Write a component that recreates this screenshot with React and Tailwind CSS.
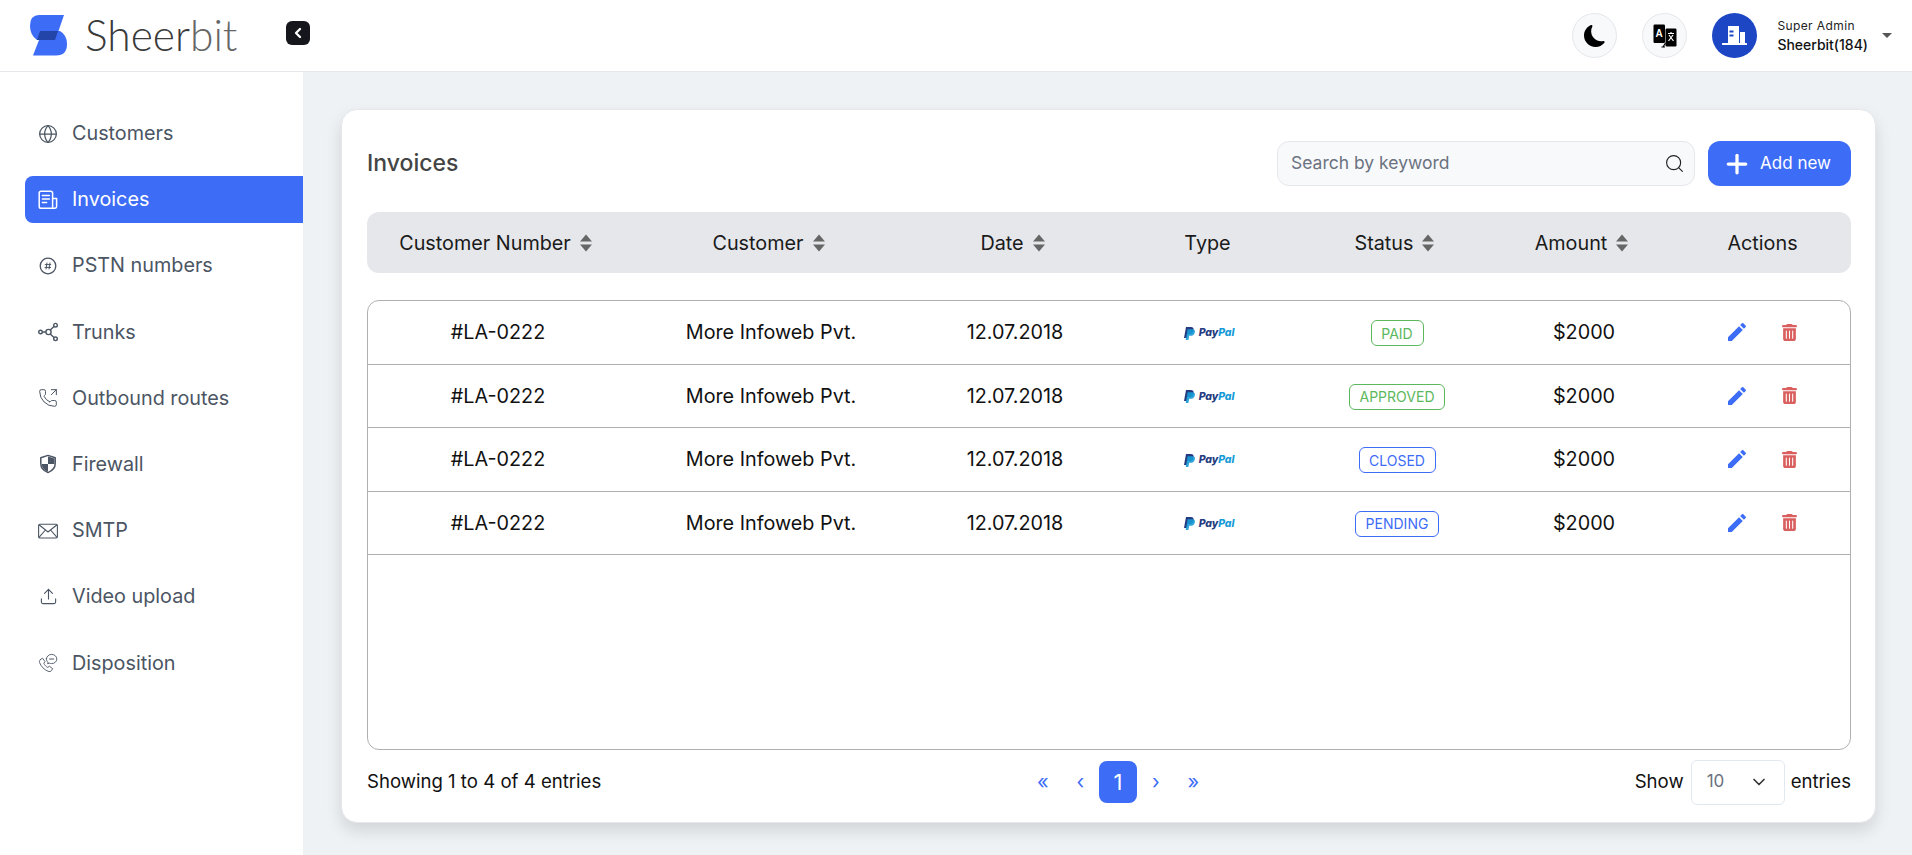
import { Globe, Upload, PhoneOutgoing, Plus, Search, ChevronLeft, ChevronDown } from 'lucide-react';
import { MdEdit } from 'react-icons/md';
import { FaTrashCan } from 'react-icons/fa6';
import { BsMoonFill } from 'react-icons/bs';

const InvoiceIcon = () => (
  <svg width="20" height="20" viewBox="0 0 20 20" fill="none" stroke="currentColor" strokeWidth="1.5" strokeLinejoin="round" strokeLinecap="round">
    <path d="M14.6 18.2H3C2 18.2 1.2 17.4 1.2 16.4V3C1.2 2 2 1.2 3 1.2H12.6C13.6 1.2 14.6 2 14.6 3Z" />
    <path d="M14.6 8.6H18.6V16.6C18.6 17.5 17.9 18.2 17 18.2H14.6" />
    <path d="M4.4 5.4H11.4M4.4 9H11.4M4.4 12.6H8.6" />
  </svg>
);

const HashIcon = () => (
  <svg width="20" height="20" viewBox="0 0 20 20" fill="none" stroke="currentColor" strokeWidth="1.3">
    <circle cx="10" cy="10" r="7.8" />
    <path d="M9 6.6L8 13.4M12 6.6L11 13.4M6.8 8.6H13.2M6.6 11.4H13" strokeWidth="1" />
  </svg>
);

const TrunksIcon = () => (
  <svg width="20" height="20" viewBox="0 0 20 20" fill="none" stroke="currentColor" strokeWidth="1.4">
    <circle cx="2.5" cy="10" r="1.8" />
    <circle cx="10.5" cy="10" r="2.6" />
    <circle cx="17.5" cy="3.2" r="1.8" />
    <circle cx="17.5" cy="16.8" r="1.8" />
    <path d="M4.4 10H7.8M12.2 8L16 4.5M12.2 12L16 15.5" />
  </svg>
);

const ShieldIcon = () => (
  <svg width="20" height="20" viewBox="0 0 20 20">
    <path d="M10 1.4L17.2 3.8V9.6C17.2 13.8 14.2 17 10 18.6C5.8 17 2.8 13.8 2.8 9.6V3.8Z" fill="none" stroke="currentColor" strokeWidth="1.5" strokeLinejoin="round" />
    <path d="M10 2.6L16.4 4.6V10H10Z" fill="currentColor" />
    <path d="M3.6 10H10V17.8C6.4 16.2 4 13.6 3.6 10Z" fill="currentColor" />
  </svg>
);

const MailIcon = () => (
  <svg width="20" height="20" viewBox="0 0 20 20" fill="none" stroke="currentColor" strokeWidth="1.1" strokeLinejoin="round">
    <rect x="0.6" y="3.2" width="18.8" height="13.8" rx="1.2" />
    <path d="M1 3.8L10 11L19 3.8M1 16.4L7.4 9M19 16.4L12.6 9" />
  </svg>
);

const DispositionIcon = () => (
  <svg width="20" height="20" viewBox="0 0 20 20" fill="none" stroke="currentColor" strokeWidth="0.9" strokeLinejoin="round" strokeLinecap="round">
    <path d="M2.6 6.4L4.6 5.2L7 8.6L5.8 10.2C6.6 12.2 8 13.6 9.8 14.4L11.4 13.2L14.6 15.6L13.6 17.6C12.8 18.6 11.4 18.8 10 18.2C6.2 16.8 3 13.4 1.6 9.6C1.2 8.2 1.6 7 2.6 6.4Z" />
    <path d="M8.4 5.8C8.6 3.2 11 1.4 13.6 1.4C16.4 1.4 18.8 3.4 18.8 6C18.8 8.6 16.4 10.6 13.6 10.6C12.8 10.6 12 10.4 11.4 10.2L9.6 10.8L10 9.2C9 8.4 8.4 7.2 8.4 5.8Z" />
    <path d="M11.6 6H15.6" strokeWidth="1.2" strokeDasharray="1 0.6" />
  </svg>
);

const TranslateIcon = () => (
  <svg width="24" height="24" viewBox="0 0 24 24">
    <rect x="0.5" y="0.5" width="11.5" height="18.5" rx="1.2" fill="#000" />
    <rect x="12.5" y="4.5" width="11" height="18" rx="1.2" fill="#000" />
    <text x="6.2" y="13" fontSize="10" fontWeight="700" fill="#fff" textAnchor="middle" fontFamily="'Liberation Sans', sans-serif">A</text>
    <path d="M15 9.5H21M18 8V9.5M16 11L20.5 17M20 11L15.5 17" stroke="#fff" strokeWidth="1.2" fill="none" />
    <path d="M8.5 23L12 23M12.5 19L10 23" stroke="#000" strokeWidth="1.2" fill="none" />
  </svg>
);

const BuildingIcon = () => (
  <svg width="25" height="19" viewBox="0 0 25 19" fill="#fff">
    <path d="M6 0H17V17H6ZM7.5 4.5V6.5H11.5V4.5ZM7.5 8.5V10.5H11.5V8.5Z" fillRule="evenodd" />
    <rect x="18" y="6" width="5" height="11" />
    <rect x="0" y="17" width="25" height="2" rx="0.5" />
  </svg>
);

const SortIcon = () => (
  <svg width="12" height="18" viewBox="0 0 12 18" fill="#666">
    <path d="M6 0.5L12 7.5H0Z" />
    <path d="M6 17.5L12 10.5H0Z" />
  </svg>
);

const PayPal = () => (
  <div className="flex items-center gap-[4px] translate-y-[1px] -translate-x-[1px]">
    <svg width="11" height="13" viewBox="0 0 11 13">
      <path d="M2 0H6.8C9.2 0 10 1.4 9.6 3.4C9.1 5.8 7.6 7 5.2 7H3.6L2.8 11H0Z" fill="#253b80" />
      <path d="M3.6 2.2H8.4C10.6 2.2 11.3 3.6 10.8 5.4C10.3 7.6 8.8 8.8 6.6 8.8H5.2L4.4 13H1.7Z" fill="#179bd7" opacity="0.9" />
    </svg>
    <span className="text-[10.5px] leading-none font-extrabold italic tracking-[-0.1px] font-['Inter',sans-serif]">
      <span className="text-[#253b80]">Pay</span>
      <span className="text-[#179bd7]">Pal</span>
    </span>
  </div>
);

const navItems = [
  { label: 'Customers', icon: <Globe size={20} strokeWidth={1.5} /> },
  { label: 'Invoices', icon: <InvoiceIcon />, active: true },
  { label: 'PSTN numbers', icon: <HashIcon /> },
  { label: 'Trunks', icon: <TrunksIcon /> },
  { label: 'Outbound routes', icon: <PhoneOutgoing size={20} strokeWidth={1.2} /> },
  { label: 'Firewall', icon: <ShieldIcon /> },
  { label: 'SMTP', icon: <MailIcon /> },
  { label: 'Video upload', icon: <Upload size={19} strokeWidth={1.4} /> },
  { label: 'Disposition', icon: <DispositionIcon /> },
];

const columns = [
  { label: 'Customer Number', sort: true },
  { label: 'Customer', sort: true },
  { label: 'Date', sort: true },
  { label: 'Type' },
  { label: 'Status', sort: true },
  { label: 'Amount', sort: true },
  { label: 'Actions' },
];

const rows = [
  { status: 'PAID', cls: 'border-[#5cb85c] text-[#5cb85c] w-[53px]' },
  { status: 'APPROVED', cls: 'border-[#5cb85c] text-[#5cb85c] w-[96px]' },
  { status: 'CLOSED', cls: 'border-[#3d6cf6] text-[#3d6cf6] w-[77px]' },
  { status: 'PENDING', cls: 'border-[#3d6cf6] text-[#3d6cf6] w-[84px]' },
];

const gridCols = 'grid grid-cols-[260px_286px_202px_188px_186px_188px_1fr]';

const App = () => {
  return (
    <div className="h-[855px] flex flex-col overflow-hidden bg-[#eff2f5] font-['Inter',sans-serif]">
      {/* Top bar */}
      <header className="h-[72px] shrink-0 bg-white border-b border-[#e5e7eb] flex items-center">
        <div className="flex items-center pl-[30px] pb-[1px]">
          <svg width="37" height="41" viewBox="0 0 37 41" className="shrink-0">
            <path d="M9 0H34L28.5 16H30Q37 20 37 29Q37 40.5 26 40.5H3L9 25H7Q0 20 0 11Q0 0 9 0Z" fill="#3d6cf6" />
            <path d="M10 16H28L25 25H7Z" fill="#2344a8" />
          </svg>
          <span className="ml-[18px] text-[42.5px] leading-none text-[#3a3a3a] font-['Lato',sans-serif] font-light">
            Sheer<span className="text-[#666]">bit</span>
          </span>
          <button className="ml-[49px] mb-[5px] w-[24px] h-[24px] rounded-md bg-[#15171c] flex items-center justify-center">
            <ChevronLeft size={16} strokeWidth={3.5} className="text-white" />
          </button>
        </div>

        <div className="ml-auto flex items-center pr-[20px]">
          <div className="w-[45px] h-[45px] rounded-full bg-[#f8f9fb] border border-[#e5e7eb] flex items-center justify-center">
            <BsMoonFill size={22} className="text-black" />
          </div>
          <div className="ml-[25px] w-[45px] h-[45px] rounded-full bg-[#f8f9fb] border border-[#e5e7eb] flex items-center justify-center">
            <TranslateIcon />
          </div>
          <div className="ml-[25px] w-[45px] h-[45px] rounded-full bg-[#1d46c4] flex items-center justify-center">
            <BuildingIcon />
          </div>
          <div className="ml-[20px] flex flex-col">
            <span className="text-[12px] leading-[18px] tracking-[0.4px] text-[#222]">Super Admin</span>
            <span className="text-[14px] leading-[20px] font-medium text-[#111]">Sheerbit(184)</span>
          </div>
          <div className="ml-[14px] w-0 h-0 border-x-[5px] border-x-transparent border-t-[5px] border-t-[#555]" />
        </div>
      </header>

      <div className="flex flex-1 min-h-0">
        {/* Sidebar */}
        <aside className="w-[303px] shrink-0 bg-white pt-[38px] pl-[25px] flex flex-col gap-[19.2px]">
          {navItems.map((item) => (
            <div
              key={item.label}
              className={
                item.active
                  ? 'h-[47px] flex items-center pl-[13px] rounded-l-lg bg-[#3d6cf6] text-white'
                  : 'h-[47px] flex items-center pl-[13px] text-[#4b5563]'
              }
            >
              <span className="w-[20px] flex justify-center shrink-0">{item.icon}</span>
              <span className="ml-[14px] pt-[1px] text-[19.8px] leading-none">{item.label}</span>
            </div>
          ))}
        </aside>

        {/* Main */}
        <main className="flex-1 min-w-0 pt-[37px] pl-[38px] pr-[36px]">
          <div className="h-[714px] bg-white rounded-2xl border border-[#e5e7eb] shadow-[0_8px_16px_rgba(0,0,0,0.12)] pl-[25px] pr-[24px] pt-[31px] flex flex-col">
            <div className="flex items-center h-[45px]">
              <h1 className="text-[23px] leading-none font-medium text-[#444]">Invoices</h1>
              <div className="ml-auto w-[418px] h-[45px] rounded-xl bg-[#f8f9fb] border border-[#e5e7eb] flex items-center pl-[13px] pr-[9px]">
                <span className="text-[17.5px] text-[#6b7280]">Search by keyword</span>
                <Search size={21} strokeWidth={1.3} className="ml-auto text-[#222]" />
              </div>
              <button className="ml-[13px] w-[143px] h-[45px] pr-[6px] rounded-xl bg-[#3d6cf6] text-white flex items-center justify-center gap-[8px]">
                <Plus size={30} strokeWidth={2.6} />
                <span className="text-[17px]">Add new</span>
              </button>
            </div>

            <div className={`${gridCols} mt-[26px] h-[61px] rounded-xl bg-[#e5e7eb] items-center text-[19.8px] text-[#1a1a1a]`}>
              {columns.map((col) => (
                <div key={col.label} className="flex items-center justify-center gap-[9px] pr-[3px]">
                  <span className="pt-[2px]">{col.label}</span>
                  {col.sort && <SortIcon />}
                </div>
              ))}
            </div>

            <div className="mt-[27px] h-[450px] rounded-xl border border-[#b0b0b0] overflow-hidden">
              {rows.map((row) => (
                <div key={row.status} className={`${gridCols} h-[63.5px] items-center border-b border-[#b0b0b0] text-[19.8px] text-[#111]`}>
                  <div className="text-center pt-[2px]">#LA-0222</div>
                  <div className="text-center pt-[2px]">More Infoweb Pvt.</div>
                  <div className="text-center pt-[2px]">12.07.2018</div>
                  <div className="flex justify-center"><PayPal /></div>
                  <div className="flex justify-center">
                    <span className={`h-[26px] translate-y-[1px] rounded-md border text-[14px] flex items-center justify-center ${row.cls}`}>{row.status}</span>
                  </div>
                  <div className="text-center pt-[2px]">$2000</div>
                  <div className="flex items-center justify-center gap-[32px] pr-[6px]">
                    <MdEdit size={24} className="text-[#3d6cf6]" />
                    <FaTrashCan size={17} className="text-[#d9605f]" />
                  </div>
                </div>
              ))}
            </div>

            <div className="relative mt-[9px] flex items-center h-[46px] text-[18.6px] text-[#111]">
              <span>Showing 1 to 4 of 4 entries</span>
              <div className="absolute left-[657px] top-[2px] flex items-center text-[#3d6cf6] text-[20px]">
                <span className="w-[37.5px] text-center">«</span>
                <span className="w-[37.5px] text-center">‹</span>
                <span className="w-[38px] h-[42px] rounded-lg bg-[#3d6cf6] text-white text-[22px] flex items-center justify-center">1</span>
                <span className="w-[37.5px] text-center">›</span>
                <span className="w-[37.5px] text-center">»</span>
              </div>
              <div className="ml-auto flex items-center">
                <span>Show</span>
                <div className="ml-[7px] w-[94px] h-[45px] rounded-md border border-[#e2e8f0] flex items-center pl-[15px] pr-[15px]">
                  <span className="text-[#6b7280] text-[17px]">10</span>
                  <ChevronDown size={20} strokeWidth={2} className="ml-auto text-[#333]" />
                </div>
                <span className="ml-[6px]">entries</span>
              </div>
            </div>
          </div>
        </main>
      </div>
    </div>
  );
};

export default App;
